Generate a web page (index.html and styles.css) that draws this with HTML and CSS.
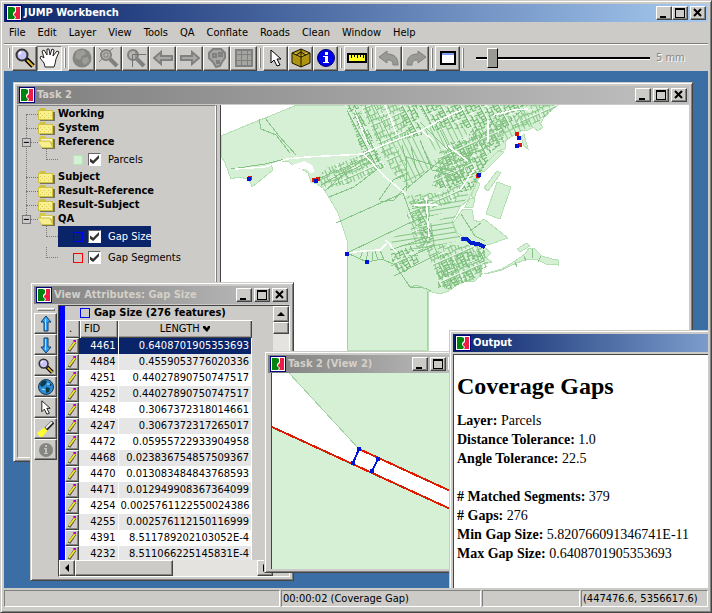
FILE: index.html
```html
<!DOCTYPE html>
<html lang="en">

<head>
  <meta charset="UTF-8">
  <title>JUMP Workbench</title>
  <link rel="stylesheet" href="styles.css">
</head>

<body>
  <svg class="defs" aria-hidden="true">
    <symbol id="logo" viewBox="0 0 16 16">
      <path fill="#000080" d="M0 0h16v16H0z" />
      <path fill="#fff" d="M1 1h14v14H1z" />
      <path fill="#008410" d="M2 2h5l2 1v3L7 8v2l2 2-1 2H2z" />
      <path fill="#ec1c45" d="M10 2h4v12H9l1-2-2-2V9l2-2z" />
    </symbol>
    <symbol id="min" viewBox="0 0 10 10"><path d="M1 8h6v2H1z" /></symbol>
    <symbol id="max" viewBox="0 0 10 10"><path d="M0 0h10v10H0zM1 2v7h8V2z" fill-rule="evenodd" /></symbol>
    <symbol id="close" viewBox="0 0 10 10"><path stroke="#000" stroke-width="2" d="M1 1l7 7M8 1L1 8" /></symbol>
    <symbol id="folder" viewBox="0 0 17 13">
      <path fill="#77745c" d="M2 13V4h15v9z" />
      <path fill="#d0c040" d="M0 2h1l1-2h5l1 2h7v10H0z" />
      <path fill="#f8f090" d="M1 3h13v8H1z" />
      <path stroke="#e0cf50" stroke-dasharray="1 3" d="M2 5.500h12M4 7.500h10M2 9.500h12" />
    </symbol>
    <symbol id="folder-open" viewBox="0 0 17 13">
      <path fill="#77745c" d="M3 3h14v10H4z" />
      <path fill="#d8c848" d="M1 2l1-2h5l1 2h7v10H3z" />
      <path fill="#fffbd0" d="M3 3h11v3H3z" />
      <path fill="#f8f090" d="M0 5h12l3 6H4z" />
      <path fill="none" stroke="#c8b840" d="M0 5h12l3 7" />
    </symbol>
    <symbol id="lens" viewBox="0 0 20 20">
      <path stroke="#000" stroke-width="5" d="M11 11l7 7" />
      <path stroke="#e6b830" stroke-width="2" d="M12 12l6 6" />
      <circle cx="7" cy="7" r="5.500" fill="#c8c4fa" stroke="#333" stroke-width="2" />
      <path stroke="#fff" stroke-width="2" d="M4 6l2-2" />
    </symbol>
    <symbol id="lens-off" viewBox="0 0 20 20">
      <path stroke="#808080" stroke-width="4" d="M11 11l7 7" />
      <circle cx="7" cy="7" r="5" fill="#b4b4b0" stroke="#808080" stroke-width="2" />
    </symbol>
    <symbol id="cursor" viewBox="0 0 12 18">
      <path fill="#fff" stroke="#000" d="M1 1v13l3-3 3 6 3-1-3-6h4z" />
    </symbol>
    <symbol id="arrow-off" viewBox="0 0 20 16">
      <path fill="#a8a8a4" stroke="#808080" stroke-width="2" d="M1 8l7-6v4h11v4H8v4z" />
    </symbol>
    <symbol id="undo" viewBox="0 0 20 16">
      <path fill="#999995" stroke="#808080" d="M0 7l8-6v3c8 0 11 4 11 11h-5c0-4-2-5-6-5v3z" />
    </symbol>
    <symbol id="arrow-up" viewBox="0 0 12 18">
      <path fill="#38a0f0" stroke="#10406c" d="M6 1l5 6H8v9H4V7H1z" />
      <path stroke="#a8e0ff" d="M5.500 4v11" />
    </symbol>
    <symbol id="pencil" viewBox="0 0 10 14">
      <path stroke="#444" stroke-width="3" d="M2 12L8 3" />
      <path stroke="#f4e420" stroke-width="2" d="M2 11L8 3" />
      <path fill="#c000c0" d="M6 1h3v2H7z" />
    </symbol>
    <symbol id="sort" viewBox="0 0 7 6"><path d="M0 0h2l2 2 1-2h2v2L4 6 0 2z" /></symbol>
  </svg>

  <header class="titlebar">
    <svg class="logo"><use href="#logo" /></svg>
    <h1>JUMP Workbench</h1>
    <div class="caption">
      <button aria-label="Minimize"><svg><use href="#min" /></svg></button>
      <button aria-label="Maximize"><svg><use href="#max" /></svg></button>
      <button class="close" aria-label="Close"><svg><use href="#close" /></svg></button>
    </div>
  </header>

  <nav class="menu">
    <button>File</button>
    <button>Edit</button>
    <button>Layer</button>
    <button>View</button>
    <button>Tools</button>
    <button>QA</button>
    <button>Conflate</button>
    <button>Roads</button>
    <button>Clean</button>
    <button>Window</button>
    <button>Help</button>
  </nav>

  <div class="toolbar">
    <div class="tools">
      <button aria-label="Zoom"><svg width="20" height="20"><use href="#lens" /></svg></button>
      <button class="pressed" aria-label="Pan">
        <svg width="22" height="22" viewBox="0 0 22 22">
          <path fill="#fff" stroke="#222" d="M6 20l-1-4-4-5 1-2 3 2L3 4l2-1 3 5V2h2l1 6 2-6 2 1-1 6 4-5 2 1-3 7-1 5-1 3z" />
        </svg>
      </button>
    </div>
    <div class="tools wide">
      <button aria-label="Zoom to full extent" disabled>
        <svg width="20" height="20" viewBox="0 0 20 20">
          <circle cx="10" cy="10" r="9.500" fill="#858582" />
          <path fill="#9c9c98" d="M5 3l7-1 2 4-4 2-2 4-5-2zM11 10l5-1 1 4-4 4-3-3z" />
        </svg>
      </button>
      <button aria-label="Zoom to layer" disabled>
        <svg width="20" height="20" viewBox="0 0 20 20">
          <use href="#lens-off" />
          <path fill="none" stroke="#808080" d="M5 5h4v4H5zM0 0l4 4M14 0l-4 4M0 14l4-4" />
        </svg>
      </button>
      <button aria-label="Zoom to selection" disabled>
        <svg width="20" height="20" viewBox="0 0 20 20">
          <use href="#lens-off" />
          <path fill="none" stroke="#747472" d="M20 6.500H6.500V19M10 3v8" />
        </svg>
      </button>
      <button aria-label="Previous extent" disabled><svg width="20" height="16"><use href="#arrow-off" /></svg></button>
      <button aria-label="Next extent" disabled><svg class="flip" width="20" height="16"><use href="#arrow-off" /></svg></button>
      <button aria-label="Palette" disabled>
        <svg width="18" height="20" viewBox="0 0 18 20">
          <path fill="#a4a4a0" stroke="#808080" stroke-width="2" d="M5 1h8l4 4v5l-3 4-2 4-4 1-3-5-4-4V5z" />
          <path fill="none" stroke="#808080" stroke-width="2" d="M5 6h3v3H5zM11 5h3v3h-3zM9 13h2v2H9z" />
        </svg>
      </button>
      <button aria-label="Grid" disabled>
        <svg width="18" height="18" viewBox="0 0 18 18">
          <path fill="#a4a4a0" stroke="#808080" stroke-width="2" d="M1 1h16v16H1z" />
          <path stroke="#808080" d="M1 5.500h16M1 11.500h16M6.500 1v16M12.500 1v16" />
        </svg>
      </button>
    </div>
    <div class="tools">
      <button aria-label="Select"><svg width="12" height="18"><use href="#cursor" /></svg></button>
      <button aria-label="Feature">
        <svg width="20" height="20" viewBox="0 0 20 20">
          <path fill="#b09410" stroke="#1a1600" d="M1 5l9-4 9 4v10l-9 4-9-4z" />
          <path fill="#dcc040" stroke="#1a1600" d="M1 5l9 4 9-4M10 9v10M10 1v8M5 7l5-3 5 3" />
        </svg>
      </button>
      <button aria-label="Feature info">
        <svg width="18" height="18" viewBox="0 0 18 18">
          <circle cx="9" cy="9" r="8.500" fill="#0000e8" stroke="#000060" />
          <path fill="#fff" d="M8 3h3v3H8zM6 7h5v6h1v1H6v-1h2V8H6z" />
        </svg>
      </button>
    </div>
    <div class="tools">
      <button aria-label="Measure">
        <svg width="20" height="10" viewBox="0 0 20 10">
          <path fill="#ffff20" stroke="#000" stroke-width="2" d="M1 1h18v8H1z" />
          <path stroke="#000" d="M4.500 1v4M7.500 1v3M10.500 1v4M13.500 1v3M16.500 1v4" />
        </svg>
      </button>
    </div>
    <div class="tools wide">
      <button aria-label="Undo" disabled><svg width="20" height="16"><use href="#undo" /></svg></button>
      <button aria-label="Redo" disabled><svg class="flip" width="20" height="16"><use href="#undo" /></svg></button>
    </div>
    <div class="tools">
      <button aria-label="Output window">
        <svg width="16" height="14" viewBox="0 0 16 14">
          <path fill="#fff" stroke="#000" stroke-width="2" d="M1 1h14v12H1z" />
          <path fill="#7c9cf0" d="M2 2h12v2H2z" />
        </svg>
      </button>
    </div>
    <div class="tools scale">
      <input type="range" id="scale" min="0" max="100" value="7">
      <label for="scale">5 mm</label>
    </div>
  </div>

  <main class="desktop">
    <section class="window task">
      <div class="titlebar inactive">
        <svg class="logo"><use href="#logo" /></svg>
        <h2>Task 2</h2>
        <div class="caption">
          <button aria-label="Minimize"><svg><use href="#min" /></svg></button>
          <button aria-label="Maximize"><svg><use href="#max" /></svg></button>
          <button class="close" aria-label="Close"><svg><use href="#close" /></svg></button>
        </div>
      </div>
      <div class="split">
        <ul class="tree">
          <li><div class="category"><svg><use href="#folder" /></svg>Working</div></li>
          <li><div class="category"><svg><use href="#folder" /></svg>System</div></li>
          <li class="open">
            <div class="category"><svg><use href="#folder-open" /></svg>Reference</div>
            <ul>
              <li><label class="layer"><i class="swatch green"></i><input type="checkbox" checked>Parcels</label></li>
            </ul>
          </li>
          <li><div class="category"><svg><use href="#folder" /></svg>Subject</div></li>
          <li><div class="category"><svg><use href="#folder" /></svg>Result-Reference</div></li>
          <li><div class="category"><svg><use href="#folder" /></svg>Result-Subject</div></li>
          <li class="open">
            <div class="category"><svg><use href="#folder-open" /></svg>QA</div>
            <ul>
              <li><label class="layer selected"><i class="swatch blue"></i><input type="checkbox" checked>Gap Size</label></li>
              <li><label class="layer"><i class="swatch red"></i><input type="checkbox" checked>Gap Segments</label></li>
            </ul>
          </li>
        </ul>
        <svg class="map" viewBox="221 105 468 353" preserveAspectRatio="xMinYMin slice">
          <defs>
            <pattern id="lots" width="23" height="19" patternUnits="userSpaceOnUse" patternTransform="rotate(-24)">
              <path fill="none" stroke="#84c484" d="M0 0h23M2 0v6M5 0v9M8 0v4M13 0v7M17 0v5M20 0v9M0 6h8M8 4h9M6 9h17M4 9v6M9 9v9M12 7v8M16 9v5M19 9v7M0 15h12M12 14h11M2 15v4M6 15v3M14 14v5M21 14v4" />
              <path fill="none" stroke="#f4fcf4" d="M0 18h23M10 0v9M0 12h6" />
            </pattern>
            <pattern id="dense" width="19" height="17" patternUnits="userSpaceOnUse" patternTransform="rotate(62)">
              <path fill="none" stroke="#6cb46c" d="M0 0h19M1 0v5M3 0v7M6 1v5M9 0v4M11 0v8M14 0v6M17 0v3M0 5h7M7 4h8M4 8h12M16 5v4M2 7v5M6 8v4M9 8v6M13 8v3M0 12h8M8 13h11M4 12v4M12 13v3M15 11v5" />
              <path fill="none" stroke="#f4fcf4" d="M0 16h19M0 10h5M17 8v6" />
            </pattern>
            <pattern id="strips" width="5" height="40" patternUnits="userSpaceOnUse" patternTransform="rotate(-26)">
              <path stroke="#8cca8c" d="M.5 0v40M0 20h5" />
            </pattern>
            <pattern id="rows" width="60" height="5" patternUnits="userSpaceOnUse" patternTransform="rotate(-9)">
              <path stroke="#84c484" d="M0 .5h60M30 0v5" />
            </pattern>
          </defs>
          <!-- land -->
          <g fill="#d6f0d6" stroke="#b4e0b4">
            <path d="M297 105L265 118 240 128 221 136V156L225 163 231 179 238 177 249 179 252 187 273 170 271 163 288 161 293 166 302 169 308 173 311 182 317 184 323 188 330 199 338 213 343 228 347 240V350H428V291L440 294 449 291 457 285 466 281 475 281 481 275 483 264 492 262 486 258 491 253 484 247 470 244 460 238 455 231 452 222 457 213 460 207 468 200 473 190 480 176 488 161 498 151 505 149 505 141 520 131 528 130 541 123 545 115 558 105z" />
            <path d="M504 152l-20 20-4-3 18-18zM501 173l-13 18-4-3 13-17zM497 182l14 5-11 32-14-5zM480 184l-6 14-3-2 6-14zM463 209l9 1 2 10 5 2 5-3 24 19-20 7-15-3-16-9-4-10zM470 198l5 1-2 8h-8zM484 274l18-5 13-8 10-7 4-6h5l8 8 10 3 6 1v5l-12-1-8-4-8-1-8 2-10 4-10 5-12 3zM517 249l10-6 3 3-10 6zM524 134l4 15-4-3-3-9zM530 125l8-4 5 6-5 4z" />
          </g>
          <!-- built-up blocks -->
          <g fill="url(#dense)">
            <path d="M345 105h13l20 48 8 14-10 4-12-14zM401 105h16l5 30-18 4zM418 105h66l-10 22-40 4zM484 105h42l-20 24-12 22-14-4-12-10zM448 143l18-6 10 22-6 18-16 12-20-2zM480 140l20-12 6 12-22 18zM468 162l16-10 4 8-16 30-12 2z" />
            <path d="M391 254l20-8 10 14-16 12-12-6zM414 200l10-2 10 44-10 6zM440 254l46-4-4 20-16 10-28 8zM437 270l28-8 10 14-26 14-10-4z" />
          </g>
          <g fill="url(#lots)">
            <path d="M360 105h28l12 30-18 18zM388 105h14l4 30-8 6zM326 168l38-14 18 14-32 16-28 4-4-10zM440 150l25-10 20 8-25 32-28 6zM405 196l36-4 24-10-9 20-40 10zM380 150l16-6 14 30-12 6z" />
            <path d="M424 244l60 2 4 18-8 14-36 10-8-14zM460 150l16-20 28-12-4 24-30 20z" />
            <path d="M525 105h32l-14 14-12 6-20 4zM406 212l10-2 12 40-10 2z" />
          </g>
          <path fill="url(#strips)" d="M388 140l20-8 30 32-10 5-22 20zM422 131l28-12 20 14-34 18zM500 118l28-6 4 14-24 12-10 10z" />
          <path fill="url(#rows)" d="M386 240l58-22 12-4 -3 8 4 12 6 6-45 10-22-6zM410 202l46-4 14-14-3 14-10 12-42 10z" />
          <!-- parcel boundaries -->
          <path fill="none" stroke="#88c488" d="M265 118l14 18 17 19M259 119l2 10 15 6 14 18M231 169l34-5 20-5M321 185l45-26M329 197l25-10 22-17M336 223l67-30M347 253l56-27 22-10M403 193l11 30M406 155l1 36M402 145l5 20M406 189l36-30 38-8M379 200l14-20 12-5M380 202l14-2 12-14M318 179l60-26M325 191l20-18 26-12M335 175l6 10M343 170l6 9M347 253l20 9 15-3 13 6 15 22 12 0 9 4M390 250l42-14M391 266l42-20M394 276l48-24M461 214l14 22 10 5M470 231l11-8M365 105l21 50M374 105l19 38M355 110l24 50M420 140l12 30 30 8M440 130l22 44M420 122l30 30M407 157l50 16M457 179l14-24M473 148l20-26M411 146l5 22 4 8M360 258l3-7M366 260l2-8M372 260v-8M378 260l-3-9M384 260l-4-10M436 170l25 14M515 262l2 5M524 256l2 5M532 249v9M541 256l-3 6" />
          <path fill="none" stroke="#a0d4a0" d="M347 253v97M427 291v59M410 287l7-2 11 5" />
          <!-- roads -->
          <path fill="none" stroke="#fff" stroke-width="1.500" d="M235 169l30-2 22-8 20-2 57-3 20 22 22 18M364 153l24-10 32-12 30-16 14-6M422 131l12 10M494 115l20-5 14-1M460 190l15-22M386 240l10 12M414 205h24M426 197l3 40M347 253l15-2 18-1 6-6M356 115l12 30M385 105l12 30M448 146l20 15M488 120v22" />
          <path fill="#fff" d="M292 165l12-4 8 4 3 7-4 1-5-4-13-1z" />
          <!-- gap segments and gaps -->
          <path fill="#dc1c00" d="M248 176h4v4h-4zM312 178h4v4h-4zM316 177h4v4h-4zM515 132h4v4h-4zM518 143h4v4h-4zM476 174h4v4h-4zM461 237h4v4h-4z" />
          <path fill="#0014d8" d="M247 177h4v4h-4zM314 179h4v4h-4zM345 252h4v4h-4zM365 260h4v4h-4zM517 136h4v4h-4zM515 144h4v4h-4zM477 173h4v4h-4z" />
          <path fill="none" stroke="#0020d0" stroke-width="4" d="M462 239h5l4 4 7 1 7 3" />
        </svg>
      </div>
    </section>

    <section class="window attributes">
      <div class="titlebar inactive">
        <svg class="logo"><use href="#logo" /></svg>
        <h2>View Attributes: Gap Size</h2>
        <div class="caption">
          <button aria-label="Minimize"><svg><use href="#min" /></svg></button>
          <button aria-label="Maximize"><svg><use href="#max" /></svg></button>
          <button class="close" aria-label="Close"><svg><use href="#close" /></svg></button>
        </div>
      </div>
      <div class="attr-body">
        <div class="side-tools">
          <button aria-label="Previous"><svg width="12" height="18"><use href="#arrow-up" /></svg></button>
          <button aria-label="Next"><svg class="down" width="12" height="18"><use href="#arrow-up" /></svg></button>
          <button aria-label="Zoom"><svg width="16" height="16"><use href="#lens" /></svg></button>
          <button aria-label="Full extent">
            <svg width="16" height="16" viewBox="0 0 16 16">
              <circle cx="8" cy="8" r="7.500" fill="#2a8cd8" stroke="#183850" />
              <path fill="#0c3c4c" d="M3 3l4-2 2 2-2 3-3 2-2-2zM8 8l4 1-1 4-3 1zM11 3l3 3-2 1z" />
              <path stroke="#b8e8ff" d="M4 10l3 1M9 5h3" />
            </svg>
          </button>
          <button aria-label="Select"><svg width="10" height="15"><use href="#cursor" /></svg></button>
          <button aria-label="Flash">
            <svg width="17" height="16" viewBox="0 0 17 16">
              <path fill="#ffff30" d="M0 12l8-6 3 3-6 7H3z" />
              <path stroke="#222" stroke-width="4" d="M9 8l7-7" />
              <path stroke="#eee" stroke-width="2" d="M9 7l6-6" />
            </svg>
          </button>
          <button aria-label="Info" disabled>
            <svg width="14" height="14" viewBox="0 0 14 14">
              <circle cx="7" cy="7" r="7" fill="#858582" />
              <path fill="#c0c0bc" d="M6 2h2v2H6zM5 5h3v5h1v1H5v-1h1V6H5z" />
            </svg>
          </button>
        </div>
        <div class="grid">
          <div class="grid-main">
            <div class="grid-view">
              <h3><i class="swatch blue"></i>Gap Size (276 features)</h3>
              <table>
                <thead>
                  <tr>
                    <th class="edit">.</th>
                    <th class="fid">FID</th>
                    <th class="length">LENGTH <svg width="7" height="6"><use href="#sort" /></svg></th>
                  </tr>
                </thead>
                <tbody>
                  <tr class="selected"><td><button aria-label="Edit 4461"><svg><use href="#pencil" /></svg></button></td><td>4461</td><td>0.6408701905353693</td></tr>
                  <tr><td><button aria-label="Edit 4484"><svg><use href="#pencil" /></svg></button></td><td>4484</td><td>0.4559053776020336</td></tr>
                  <tr><td><button aria-label="Edit 4251"><svg><use href="#pencil" /></svg></button></td><td>4251</td><td>0.44027890750747517</td></tr>
                  <tr><td><button aria-label="Edit 4252"><svg><use href="#pencil" /></svg></button></td><td>4252</td><td>0.44027890750747517</td></tr>
                  <tr><td><button aria-label="Edit 4248"><svg><use href="#pencil" /></svg></button></td><td>4248</td><td>0.3067372318014661</td></tr>
                  <tr><td><button aria-label="Edit 4247"><svg><use href="#pencil" /></svg></button></td><td>4247</td><td>0.3067372317265017</td></tr>
                  <tr><td><button aria-label="Edit 4472"><svg><use href="#pencil" /></svg></button></td><td>4472</td><td>0.05955722933904958</td></tr>
                  <tr><td><button aria-label="Edit 4468"><svg><use href="#pencil" /></svg></button></td><td>4468</td><td>0.023836754857509367</td></tr>
                  <tr><td><button aria-label="Edit 4470"><svg><use href="#pencil" /></svg></button></td><td>4470</td><td>0.013083484843768593</td></tr>
                  <tr><td><button aria-label="Edit 4471"><svg><use href="#pencil" /></svg></button></td><td>4471</td><td>0.012949908367364099</td></tr>
                  <tr><td><button aria-label="Edit 4254"><svg><use href="#pencil" /></svg></button></td><td>4254</td><td>0.0025761122550024386</td></tr>
                  <tr><td><button aria-label="Edit 4255"><svg><use href="#pencil" /></svg></button></td><td>4255</td><td>0.002576112150116999</td></tr>
                  <tr><td><button aria-label="Edit 4391"><svg><use href="#pencil" /></svg></button></td><td>4391</td><td>8.511789202103052E-4</td></tr>
                  <tr><td><button aria-label="Edit 4232"><svg><use href="#pencil" /></svg></button></td><td>4232</td><td>8.511066225145831E-4</td></tr>
                </tbody>
              </table>
            </div>
            <div class="vscroll">
              <button aria-label="Scroll up"><svg width="8" height="4" viewBox="0 0 8 4"><path d="M4 0l4 4H0z" /></svg></button>
              <div class="thumb"></div>
            </div>
          </div>
          <div class="hscroll">
            <button aria-label="Scroll left"><svg width="4" height="8" viewBox="0 0 4 8"><path d="M0 4l4-4v8z" /></svg></button>
            <div class="thumb"></div>
            <div class="track"></div>
            <button aria-label="Scroll right"><svg width="4" height="8" viewBox="0 0 4 8"><path d="M4 4L0 0v8z" /></svg></button>
          </div>
        </div>
      </div>
    </section>

    <section class="window view2">
      <div class="titlebar inactive">
        <svg class="logo"><use href="#logo" /></svg>
        <h2>Task 2 (View 2)</h2>
        <div class="caption">
          <button aria-label="Minimize"><svg><use href="#min" /></svg></button>
          <button aria-label="Maximize"><svg><use href="#max" /></svg></button>
          <button class="close" aria-label="Close"><svg><use href="#close" /></svg></button>
        </div>
      </div>
      <svg class="map" viewBox="272 373 194 196" preserveAspectRatio="xMinYMin slice">
        <path fill="#d6f0d6" d="M272 373h198v196H272z" />
        <path fill="#fff" d="M272 373h17l70 76 111 51v18L272 427z" />
        <path stroke="#a0d4a0" d="M289 373l70 76" />
        <path fill="none" stroke="#dc1c00" stroke-width="2" d="M272 427l198 91M359 449l111 51" />
        <path fill="none" stroke="#0014e0" stroke-width="2" d="M359 449l-6 14M378 459l-6 12" />
        <path fill="#0014d8" d="M357 447h4v4h-4zM351 461h4v4h-4zM376 457h4v4h-4zM370 469h4v4h-4z" />
      </svg>
    </section>

    <section class="window output">
      <div class="titlebar">
        <svg class="logo"><use href="#logo" /></svg>
        <h2>Output</h2>
      </div>
      <article>
        <h1>Coverage Gaps</h1>
        <p>
          <b>Layer:</b> Parcels<br>
          <b>Distance Tolerance:</b> 1.0<br>
          <b>Angle Tolerance:</b> 22.5
        </p>
        <p>
          <b># Matched Segments:</b> 379<br>
          <b># Gaps:</b> 276<br>
          <b>Min Gap Size:</b> 5.820766091346741E-11<br>
          <b>Max Gap Size:</b> 0.6408701905353693
        </p>
      </article>
    </section>
  </main>

  <footer class="status">
    <div class="message"></div>
    <div class="time">00:00:02 (Coverage Gap)</div>
    <div class="memory"></div>
    <div class="coords">(447476.6, 5356617.6)</div>
  </footer>
</body>

</html>
```
FILE: styles.css
```css
*,
*::before,
*::after {
  box-sizing: border-box;
}

body {
  margin: 0;
  height: 100vh;
  display: flex;
  flex-direction: column;
  overflow: hidden;
  background: #cccbc7;
  border: 1px solid;
  border-color: #cccbc7 #444 #444 #cccbc7;
  padding: 3px 3px 2px 3px;
  box-shadow: inset 1px 1px #fff, inset -1px -1px #808080;
  color: #000;
  font: 11px/14px "DejaVu Sans Condensed", Tahoma, sans-serif;
}

h1,
h2,
h3,
p,
ul {
  margin: 0;
  padding: 0;
  font-size: 11px;
}

ul {
  list-style: none;
}

button {
  font: inherit;
  color: inherit;
  padding: 0;
  border: 1px solid;
  border-color: #fff #444 #444 #fff;
  box-shadow: inset -1px -1px #848480;
  background: #cccbc7;
  display: flex;
  align-items: center;
  justify-content: center;
}

svg {
  display: block;
  flex: none;
}

.defs {
  position: absolute;
  width: 0;
  height: 0;
}

.flip {
  transform: scaleX(-1);
}

.down {
  transform: scaleY(-1);
}

/* title bars */
.titlebar {
  flex: none;
  height: 18px;
  display: flex;
  align-items: center;
  gap: 2px;
  padding: 0 2px;
  color: #fff;
  background: linear-gradient(to right, #0a246a, #a6caf0);
}

.titlebar.inactive {
  color: #d4d0c8;
  background: linear-gradient(to right, #808080, #c0c0c0);
}

.titlebar h1,
.titlebar h2 {
  flex: 1;
  white-space: nowrap;
}

.logo {
  width: 16px;
  height: 16px;
}

.caption {
  display: flex;
}

.caption button {
  width: 16px;
  height: 14px;
}

.caption .close {
  margin-left: 2px;
}

.caption svg {
  width: 10px;
  height: 10px;
}

.menu {
  flex: none;
  display: flex;
  gap: 12px;
  height: 22px;
  padding: 0 5px;
  border-bottom: 1px solid #808080;
  box-shadow: 0 1px #fff;
}

.menu button {
  border: 0;
  box-shadow: none;
  background: none;
}

/* toolbar */
.toolbar {
  flex: none;
  display: flex;
  height: 27px;
  padding: 1px 0 0 4px;
}

.tools {
  display: flex;
  align-items: center;
  margin-right: 2px;
}

.tools::before {
  content: "";
  width: 2px;
  height: 20px;
  margin-right: 2px;
  border-left: 1px solid #fff;
  border-right: 1px solid #808080;
}

.tools button {
  width: 25px;
  height: 25px;
}

.tools.wide button {
  width: 27px;
}

.tools .pressed {
  border-color: #808080 #fff #fff #808080;
  box-shadow: none;
  background: #dfdedb;
}

.scale {
  color: #888885;
  text-shadow: 1px 1px #fff;
  white-space: nowrap;
  flex: 1;
}

.scale input {
  appearance: none;
  flex: 0 1 174px;
  min-width: 60px;
  height: 20px;
  margin: 0 6px 0 10px;
  background: none;
}

.scale input::-webkit-slider-runnable-track {
  height: 3px;
  background: #000;
  border-bottom: 1px solid #fff;
}

.scale input::-webkit-slider-thumb {
  appearance: none;
  width: 11px;
  height: 20px;
  margin-top: -9px;
  background: #9a9a94;
  border: 1px solid;
  border-color: #fff #000 #000 #fff;
}

/* desktop and its internal windows */
.desktop {
  flex: 1;
  min-height: 0;
  position: relative;
  overflow: hidden;
  background: #3a6ea5;
}

.window {
  position: absolute;
  display: flex;
  flex-direction: column;
  padding: 3px;
  background: #cccbc7;
  border: 1px solid;
  border-color: #cccbc7 #444 #444 #cccbc7;
  box-shadow: inset 1px 1px #fff, inset -1px -1px #808080;
}

.window .caption {
  gap: 2px;
}

.window .close {
  margin-left: 0;
}

.task {
  left: 9px;
  top: 11px;
  width: 680px;
  height: 380px;
}

.attributes {
  left: 26px;
  top: 211px;
  width: 264px;
  height: 299px;
}

.view2 {
  left: 260px;
  top: 280px;
  width: 206px;
  height: 222px;
}

.output {
  left: 445px;
  top: 259px;
  width: 360px;
  height: 300px;
}

.split {
  flex: 1;
  min-height: 0;
  display: flex;
  margin-top: 1px;
}

.map {
  flex: 1;
  min-width: 0;
  min-height: 0;
  background: #fff;
  border-left: 1px solid #444;
  shape-rendering: crispEdges;
}

.view2 .map {
  margin-left: 3px;
}

/* layer tree */
.tree {
  flex: none;
  width: 199px;
  margin-right: 4px;
  padding: 1px 0 0 8px;
  border: 1px solid;
  border-color: #808080 #fff #fff #808080;
  box-shadow: 1px 0 #808080;
}

.tree li {
  position: relative;
  padding-left: 12px;
}

/* dotted connectors */
.tree li::before {
  content: "";
  position: absolute;
  left: 0;
  top: 7px;
  width: 12px;
  border-top: 1px dotted #777;
}

.tree li::after {
  content: "";
  position: absolute;
  left: 0;
  top: 7px;
  bottom: -7px;
  border-left: 1px dotted #777;
}

.tree li:last-child::after {
  display: none;
}

.tree .open > .category::before {
  content: "−";
  position: absolute;
  z-index: 1;
  left: -4px;
  top: 3px;
  width: 9px;
  height: 9px;
  border: 1px solid #777;
  background: #cccbc7;
  font-size: 9px;
  line-height: 7px;
  text-align: center;
}

.tree ul {
  padding-left: 8px;
}

.tree ul li::before {
  top: 10px;
}

.tree ul li::after,
.tree ul li:last-child::after {
  display: block;
  top: 0;
  bottom: 10px;
}

.category {
  display: flex;
  align-items: center;
  gap: 3px;
  height: 14px;
  font-weight: bold;
}

.category svg {
  width: 17px;
  height: 13px;
}

.layer {
  display: flex;
  align-items: center;
  width: max-content;
  height: 21px;
  padding-left: 15px;
}

.layer.selected {
  color: #fff;
  background: #0a246a;
}

.layer input {
  appearance: none;
  width: 13px;
  height: 13px;
  margin: 0 7px 0 5px;
  background: #fff;
  border: 1px solid;
  border-color: #666 #fff #fff #666;
}

.layer input:checked::after {
  content: "";
  display: block;
  width: 9px;
  height: 9px;
  margin: 1px;
  background: #333;
  clip-path: polygon(0 40%, 35% 65%, 100% 0, 100% 35%, 35% 100%, 0 75%);
}

.swatch {
  width: 10px;
  height: 10px;
  border: 1px solid;
}

.swatch.green {
  color: #b4e4b4;
  background: #d6f0d6;
}

.swatch.blue {
  color: #0000ff;
}

.swatch.red {
  color: #ff0000;
}

/* attribute table */
.attr-body {
  flex: 1;
  min-height: 0;
  display: flex;
}

.side-tools {
  width: 24px;
  padding-top: 4px;
}

.side-tools::before {
  content: "";
  display: block;
  height: 3px;
  margin: 0 3px 2px;
  border: 1px solid;
  border-color: #fff #808080 #808080 #fff;
}

.side-tools button {
  width: 23px;
  height: 21px;
}

.grid {
  flex: 1;
  min-width: 0;
  display: flex;
  flex-direction: column;
  margin-top: 1px;
  border: 1px solid;
  border-color: #444 #fff #fff #444;
}

.grid-main {
  flex: 1;
  min-height: 0;
  display: flex;
}

.grid-view {
  flex: 1;
  overflow: hidden;
  border-left: 6px solid #0000ff;
}

.grid h3 {
  display: flex;
  align-items: center;
  gap: 4px;
  height: 14px;
  padding-left: 15px;
}

table {
  width: 187px;
  table-layout: fixed;
  border-collapse: collapse;
}

th {
  height: 18px;
  padding: 0 4px;
  font-weight: normal;
  text-align: left;
  box-shadow: inset 1px 1px #fff, inset -1px -1px #444, inset -2px -2px #999;
}

th.edit {
  width: 15px;
}

th.fid {
  width: 38px;
}

th.length {
  text-align: center;
}

th svg {
  display: inline-block;
}

td {
  height: 16px;
  padding: 0 2px;
  line-height: 14px;
  text-align: right;
  background: #fff;
  border-right: 1px solid #fff;
}

tr:nth-child(even) td {
  background: #e6e6e6;
}

tr.selected td {
  color: #fff;
  background: #0a246a;
}

td:first-child {
  padding: 0;
  border: 0;
}

td button {
  width: 14px;
  height: 16px;
}

td svg {
  width: 10px;
  height: 14px;
}

.vscroll {
  width: 16px;
  background: #e4e3e0;
}

.vscroll button,
.hscroll button {
  width: 16px;
  height: 16px;
}

.thumb {
  height: 12px;
  background: #cccbc7;
  border: 1px solid;
  border-color: #fff #444 #444 #fff;
  box-shadow: inset -1px -1px #848480;
}

.hscroll {
  flex: none;
  display: flex;
  margin-right: 16px;
}

.hscroll .thumb {
  width: 98px;
  height: 16px;
}

.track {
  flex: 1;
  background: #e4e3e0;
}

/* output report */
.output article {
  flex: 1;
  margin-top: 2px;
  padding: 17px 3px;
  background: #fff;
  border: 1px solid #444;
  font: 14px/19px "Liberation Serif", "Times New Roman", serif;
}

.output article h1 {
  margin-bottom: 11px;
  font-size: 24px;
  line-height: 28px;
}

.output p {
  margin-bottom: 19px;
  font-size: 14px;
}

/* status bar */
.status {
  flex: none;
  display: flex;
  gap: 1px;
  padding-top: 2px;
  height: 22px;
}

.status div {
  height: 17px;
  padding: 0 1px;
  border: 1px solid;
  border-color: #808080 #fff #fff #808080;
  line-height: 15px;
  white-space: nowrap;
}

.message {
  flex: 1;
}

.time {
  width: 200px;
}

.memory {
  width: 98px;
}

.coords {
  width: 127px;
}
```
